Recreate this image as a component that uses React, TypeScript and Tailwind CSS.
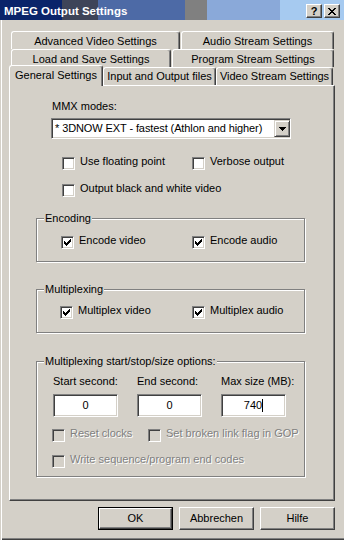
import React from 'react';

const raised =
  'border border-t-white border-l-white border-r-[#404040] border-b-[#404040] shadow-[inset_-1px_-1px_0_#808080]';
const sunken =
  'border border-t-[#808080] border-l-[#808080] border-r-white border-b-white shadow-[inset_1px_1px_0_#404040,inset_-1px_-1px_0_#d4d0c8]';

const CHECK = ['......#', '.....##', '#...###', '##.###.', '#####..', '.###...', '..#....'];
const ARROW = ['#######', '.#####.', '..###..', '...#...'];
const CROSS = ['##....##', '.##..##.', '..####..', '...##...', '..####..', '.##..##.', '##....##'];

function Pixels({ rows, color = '#000' }: { rows: string[]; color?: string }) {
  const w = rows[0].length;
  return (
    <svg width={w} height={rows.length} viewBox={`0 0 ${w} ${rows.length}`} shapeRendering="crispEdges">
      {rows.flatMap((r, y) =>
        r.split('').map((c, x) =>
          c === '#' ? <rect key={`${x}-${y}`} x={x} y={y} width={1} height={1} fill={color} /> : null
        )
      )}
    </svg>
  );
}

function CheckBox({
  label,
  checked = false,
  disabled = false,
  className = '',
}: {
  label: string;
  checked?: boolean;
  disabled?: boolean;
  className?: string;
}) {
  return (
    <div className={`flex items-start ${className}`}>
      <div
        className={`w-[13px] h-[13px] shrink-0 flex items-center justify-center ${sunken} ${
          disabled ? 'bg-[#d4d0c8]' : 'bg-white'
        }`}
      >
        {checked && <Pixels rows={CHECK} />}
      </div>
      <span
        className={`-mt-[2px] ml-[5px] leading-[13px] whitespace-nowrap ${
          disabled ? 'text-[#808080] [text-shadow:1px_1px_0_#fff]' : ''
        }`}
      >
        {label}
      </span>
    </div>
  );
}

function Group({ title, className = '', children }: { title: string; className?: string; children?: React.ReactNode }) {
  return (
    <div className={`relative border border-[#808080] shadow-[1px_1px_0_#fff,inset_1px_1px_0_#fff] ${className}`}>
      <span className="absolute -top-[7px] left-[7px] px-[1px] bg-[#d4d0c8] leading-[13px] whitespace-nowrap">
        {title}
      </span>
      {children}
    </div>
  );
}

function Tab({ label, w, pad, selected = false }: { label: string; w: string; pad: string; selected?: boolean }) {
  return (
    <div
      className={`${w} ${pad} ${
        selected ? 'h-[21px] -mb-px relative z-10' : 'h-[18px]'
      } flex justify-center shrink-0 leading-[13px] whitespace-nowrap bg-[#d4d0c8] border-t border-l border-r border-t-white border-l-white border-r-[#404040] rounded-t-[3px] shadow-[inset_-1px_0_0_#808080]`}
    >
      {label}
    </div>
  );
}

function Button({ label, isDefault = false }: { label: string; isDefault?: boolean }) {
  return (
    <div className={`w-[75px] h-[23px] flex ${isDefault ? 'border border-black' : ''}`}>
      <div className={`flex-1 flex items-center justify-center leading-[13px] ${raised}`}>{label}</div>
    </div>
  );
}

function NumberField({ value, caret = false }: { value: string; caret?: boolean }) {
  return (
    <div className={`w-[65px] h-[23px] bg-white flex items-center justify-center leading-[13px] ${sunken}`}>
      <span>{value}</span>
      {caret && <span className="w-px h-[13px] bg-black" />}
    </div>
  );
}

export default function App() {
  return (
    <div className="w-[344px] h-[540px] bg-[#d4d0c8] flex flex-col text-[11px] text-black font-['Liberation_Sans',Arial,sans-serif] shadow-[inset_1px_0_0_#d4d0c8,inset_2px_0_0_#fff,inset_0_-1px_0_#404040,inset_0_-2px_0_#808080] overflow-hidden">
      {/* title bar */}
      <div className="h-[20px] flex items-start shrink-0 bg-[linear-gradient(to_right,#0a246a_0_62px,#3e4458_62px_98px,#4d6aa6_98px_185px,#808080_185px_207px,#8aa9d9_207px_280px,#a6caf0_280px)]">
        <span className="ml-[4px] mt-[5px] leading-[13px] text-white font-bold text-[11.5px] whitespace-nowrap">
          MPEG Output Settings
        </span>
        <div className="ml-auto mr-[4px] mt-[4px] flex gap-[2px]">
          <div className={`w-[16px] h-[14px] bg-[#d4d0c8] flex items-center justify-center font-bold text-[11px] leading-[11px] ${raised}`}>
            ?
          </div>
          <div className={`w-[16px] h-[14px] bg-[#d4d0c8] flex items-center justify-center ${raised}`}>
            <Pixels rows={CROSS} />
          </div>
        </div>
      </div>

      {/* tabs */}
      <div className="ml-[9px] mt-[11px] flex flex-col">
        <div className="flex pl-[2px] gap-[1px]">
          <Tab label="Advanced Video Settings" w="w-[169px]" pad="pt-[3px]" />
          <Tab label="Audio Stream Settings" w="w-[153px]" pad="pt-[3px]" />
        </div>
        <div className="flex pl-[2px] gap-[1px]">
          <Tab label="Load and Save Settings" w="w-[160px]" pad="pt-[3px]" />
          <Tab label="Program Stream Settings" w="w-[162px]" pad="pt-[3px]" />
        </div>
        <div className="flex items-end h-[20px] -mt-[2px]">
          <Tab label="General Settings" w="w-[94px]" pad="pt-[3px]" selected />
          <Tab label="Input and Output files" w="w-[113px]" pad="pt-[2px]" />
          <Tab label="Video Stream Settings" w="w-[117px]" pad="pt-[2px]" />
        </div>

        {/* panel */}
        <div className="w-[326px] h-[416px] flex flex-col border border-t-white border-l-white border-r-[#404040] border-b-[#404040] shadow-[inset_-1px_-1px_0_#808080]">
          <span className="ml-[42px] mt-[14px] leading-[13px]">MMX modes:</span>
          <div className={`ml-[41px] mt-[5px] w-[240px] h-[21px] bg-white flex items-center ${sunken}`}>
            <span className="ml-[3px] leading-[13px] whitespace-nowrap tracking-[-0.1px]">
              * 3DNOW EXT - fastest (Athlon and higher)
            </span>
            <div className="ml-auto w-[16px] h-[17px] bg-[#d4d0c8] flex items-center justify-center border border-t-[#d4d0c8] border-l-[#d4d0c8] border-r-[#404040] border-b-[#404040] shadow-[inset_1px_1px_0_#fff,inset_-1px_-1px_0_#808080]">
              <Pixels rows={ARROW} />
            </div>
          </div>

          <div className="ml-[52px] mt-[18px] flex">
            <CheckBox label="Use floating point" className="w-[130px]" />
            <CheckBox label="Verbose output" />
          </div>
          <div className="ml-[52px] mt-[14px] flex">
            <CheckBox label="Output black and white video" />
          </div>

          <Group title="Encoding" className="ml-[26px] mt-[21px] w-[269px] h-[44px] shrink-0">
            <div className="ml-[24px] mt-[17px] flex">
              <CheckBox label="Encode video" checked className="w-[131px]" />
              <CheckBox label="Encode audio" checked />
            </div>
          </Group>

          <Group title="Multiplexing" className="ml-[26px] mt-[27px] w-[269px] h-[44px] shrink-0">
            <div className="ml-[23px] mt-[16px] flex">
              <CheckBox label="Multiplex video" checked className="w-[132px]" />
              <CheckBox label="Multiplex audio" checked />
            </div>
          </Group>

          <Group
            title="Multiplexing start/stop/size options:"
            className="ml-[26px] mt-[28px] w-[269px] h-[116px] shrink-0"
          >
            <div className="ml-[16px] mt-[13px] grid grid-cols-[65px_65px_65px] gap-x-[19px]">
              <span className="leading-[13px] whitespace-nowrap">Start second:</span>
              <span className="leading-[13px] whitespace-nowrap">End second:</span>
              <span className="leading-[13px] whitespace-nowrap">Max size (MB):</span>
              <div className="mt-[6px]">
                <NumberField value="0" />
              </div>
              <div className="mt-[6px]">
                <NumberField value="0" />
              </div>
              <div className="mt-[6px]">
                <NumberField value="740" caret />
              </div>
            </div>
            <div className="ml-[15px] mt-[12px] flex">
              <CheckBox label="Reset clocks" disabled className="w-[96px]" />
              <CheckBox label="Set broken link flag in GOP" disabled />
            </div>
            <div className="ml-[15px] mt-[13px] flex">
              <CheckBox label="Write sequence/program end codes" disabled />
            </div>
          </Group>
        </div>
      </div>

      {/* buttons */}
      <div className="mt-[6px] mr-[9px] flex justify-end gap-[6px]">
        <Button label="OK" isDefault />
        <Button label="Abbrechen" />
        <Button label="Hilfe" />
      </div>
    </div>
  );
}
